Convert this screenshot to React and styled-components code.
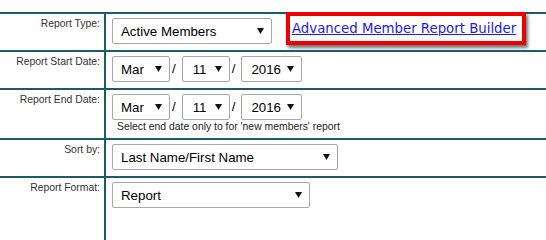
import React from 'react';
import styled, { createGlobalStyle } from 'styled-components';

const GlobalStyle = createGlobalStyle`
  html, body {
    margin: 0;
    padding: 0;
    background: #ffffff;
  }
  body {
    font-family: "Liberation Sans", Arial, sans-serif;
  }
`;

const LINE = '#1d5b66';

// Layout
const Page = styled.div`
  display: flex;
  flex-direction: column;
  min-height: 100vh;
  box-sizing: border-box;
  padding-top: 12px;
`;

const Form = styled.div`
  flex: 1;
  display: flex;
  flex-direction: column;
  width: 546px;
`;

const Row = styled.div`
  display: flex;
  flex: ${props => (props.fill ? 1 : '0 0 auto')};
  border-top: 2px solid ${LINE};
`;

const Label = styled.div`
  flex: 0 0 100px;
  border-right: 2px solid ${LINE};
  padding: 4px 4px 0 0;
  text-align: right;
  font-size: 10.4px;
  line-height: 12px;
  color: #333333;
`;

const Field = styled.div`
  flex: 1;
  padding: 4px 6px ${props => props.pb || 6}px 6px;
`;

const Line = styled.div`
  display: flex;
  align-items: flex-start;
`;

// Select boxes
const SelectBox = styled.div`
  box-sizing: border-box;
  display: flex;
  align-items: center;
  justify-content: space-between;
  width: ${props => props.w}px;
  height: 26px;
  padding: 0 7px 0 ${props => props.pl || 8}px;
  border: 1px solid #a9a9a9;
  border-radius: 2px;
  background: #ffffff;
  font-size: 13.3px;
  color: #000000;
`;

const Arrow = () => (
  <svg width="7" height="6" viewBox="0 0 7 6">
    <polygon points="0,0 7,0 3.5,6" fill="#111" />
  </svg>
);

const Select = ({ w, pl, children }) => (
  <SelectBox w={w} pl={pl}>
    <span>{children}</span>
    <Arrow />
  </SelectBox>
);

const Slash = styled.span`
  font-size: 13.3px;
  line-height: 26px;
  color: #000;
  margin: 0 6px 0 2px;
`;

const Note = styled.div`
  font-size: 10.4px;
  line-height: 13px;
  color: #222;
  padding-left: 5px;
`;

// Highlighted link (annotation box over the row line)
const Highlight = styled.div`
  box-sizing: border-box;
  margin: -6px 0 -1px 14px;
  width: 240px;
  height: 33px;
  border: 4px solid #ee0000;
  box-shadow: 2px 3px 3px rgba(0, 0, 0, 0.55);
  display: flex;
  align-items: center;
  padding: 0 0 0 2px;
  background: #ffffff;
`;

const Link = styled.a`
  font-family: "DejaVu Sans", Verdana, sans-serif;
  font-size: 13.3px;
  color: #1a1aee;
  text-decoration: underline;
  white-space: nowrap;
`;

const DateRow = () => (
  <Line>
    <Select w={58}>Mar</Select>
    <Slash>/</Slash>
    <Select w={48} pl={10}>11</Select>
    <Slash>/</Slash>
    <Select w={61} pl={9}>2016</Select>
  </Line>
);

export default function App() {
  return (
    <Page>
      <GlobalStyle />
      <Form>
        <Row>
          <Label>Report Type:</Label>
          <Field>
            <Line>
              <Select w={160}>Active Members</Select>
              <Highlight>
                <Link href="#">Advanced Member Report Builder</Link>
              </Highlight>
            </Line>
          </Field>
        </Row>
        <Row>
          <Label>Report Start Date:</Label>
          <Field>
            <DateRow />
          </Field>
        </Row>
        <Row>
          <Label>Report End Date:</Label>
          <Field pb={5}>
            <DateRow />
            <Note>Select end date only to for 'new members' report</Note>
          </Field>
        </Row>
        <Row>
          <Label>Sort by:</Label>
          <Field>
            <Select w={226}>Last Name/First Name</Select>
          </Field>
        </Row>
        <Row fill>
          <Label>Report Format:</Label>
          <Field pb={5}>
            <Select w={198}>Report</Select>
          </Field>
        </Row>
      </Form>
    </Page>
  );
}
